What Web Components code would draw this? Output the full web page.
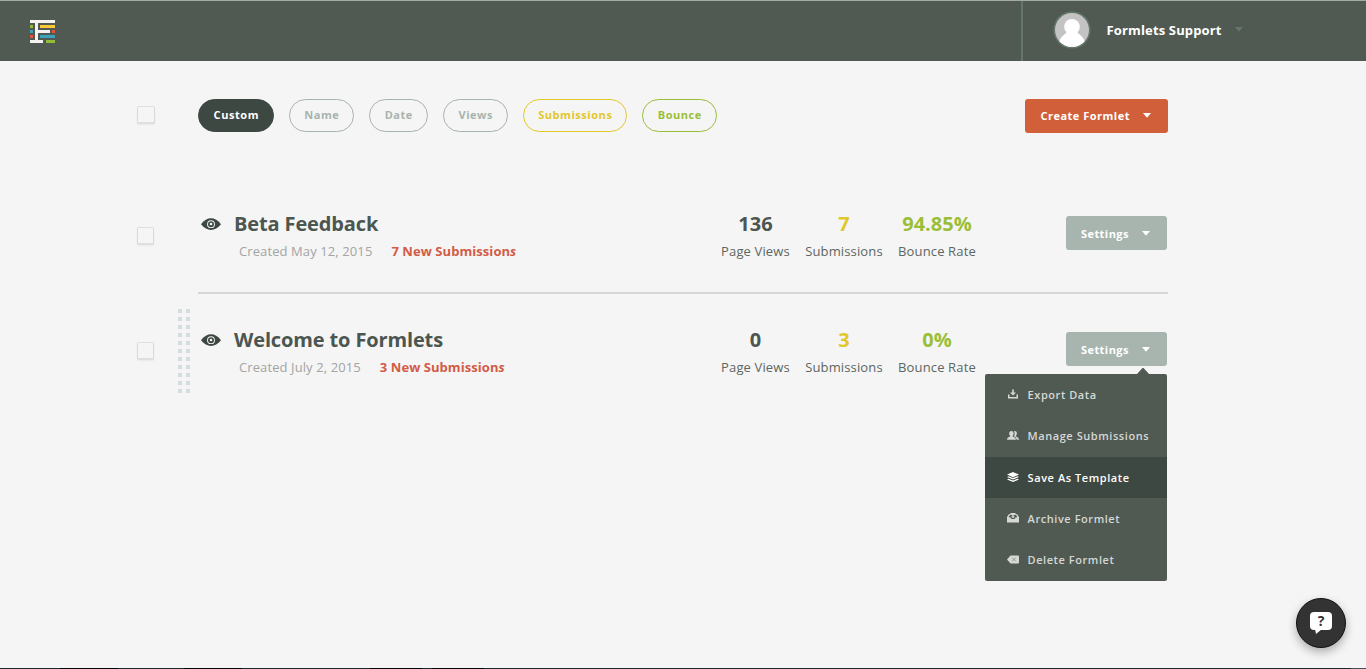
<!DOCTYPE html>
<html lang="en">
<head>
<meta charset="utf-8">
<title>Formlets</title>
<style>
html,body{margin:0;padding:0}
body{width:1366px;height:669px;overflow:hidden;background:#f5f5f5;font-family:"Open Sans","Noto Sans",sans-serif;color:#4c5651}
</style>
</head>
<body>
<formlets-app></formlets-app>
<script>
const define=(name,html)=>customElements.define(name,class extends HTMLElement{
  connectedCallback(){
    if(this.shadowRoot)return;
    const t=document.createElement('template');
    t.innerHTML=typeof html==='function'?html(this):html;
    this.attachShadow({mode:'open'}).appendChild(t.content.cloneNode(true));
  }
});

define('app-logo',`<style>:host{display:block;width:25px;height:23px}svg{display:block}</style>
<svg width="25" height="23" shape-rendering="crispEdges">
<path fill="#f5f3f1" d="M0 0h25v3H8v7h12v3H8v7h5v3H0v-3h5V3H0z"/>
<path fill="#fdc735" d="M10 5h15v3H10z"/><path fill="#91bd3a" d="M0 5h3v3H0zM16 20h9v3h-9z"/>
<path fill="#3ea2b9" d="M0 10h3v3H0zM10 15h15v3H10z"/><path fill="#e9513f" d="M0 15h3v3H0zM22 10h3v3h-3z"/></svg>`);

define('caret-down',`<style>:host{display:block;width:8px;height:5px}svg{display:block}</style>
<svg width="8" height="5"><path fill="currentColor" d="M0 0h8L4 4.800z"/></svg>`);

define('user-avatar',`<style>:host{display:block;width:38px;height:38px}svg{display:block}</style>
<svg width="38" height="38" viewBox="0 0 38 38"><defs><clipPath id="c"><circle cx="19" cy="19" r="17"/></clipPath></defs>
<circle cx="19" cy="19" r="18.6" fill="#64766b"/><circle cx="19" cy="19" r="17" fill="#c3c3c3"/>
<g clip-path="url(#c)" fill="#fff"><circle cx="19" cy="15.700" r="7.800"/><path d="M14 20h10c0 3 6 4 8 11v7H6v-7c2-7 8-8 8-11z"/></g></svg>`);

define('app-header',`<style>
:host{display:flex;box-sizing:border-box;height:61px;background:#505a53;border-top:1px solid #a3aaa5}
app-logo{margin:19px 0 0 30px}
.user{margin-left:auto;width:343px;border-left:2px solid #64766b;display:flex;align-items:flex-start;color:#fff}
user-avatar{margin:10px 0 0 30px}
.name{margin:20px 0 0 15.5px;font:700 13px/18px "Open Sans",sans-serif;letter-spacing:.15px;width:115px;white-space:nowrap}
caret-down{color:#64766b;margin:26px 0 0 13.5px}
</style><app-logo></app-logo><div class="user"><user-avatar></user-avatar><span class="name"><slot></slot></span><caret-down></caret-down></div>`);

define('check-box',`<style>:host{display:block;box-sizing:border-box;width:17px;height:18px;border:1px solid #dadada;border-bottom:2px solid #dfdfdf;border-top-color:#e0e0e0;border-radius:1.5px;background:#f5f5f5;box-shadow:0 1px 2px #0000000d}</style>`);

define('filter-pill',`<style>
:host{display:flex;box-sizing:border-box;height:33px;border:1px solid var(--c,#a7b4ad);border-radius:17px;color:var(--c,#a7b4ad);align-items:center;justify-content:center;font:700 11px/15px "Open Sans",sans-serif;letter-spacing:.55px;white-space:nowrap;width:var(--w);padding:0 0 2px .6px}
:host([active]){background:#3e4842;border-color:#3e4842;color:#fff}
</style><slot></slot>`);

define('drop-button',`<style>
:host{display:flex;box-sizing:border-box;height:34px;width:var(--w);border-radius:3px;background:var(--bg,#a7b5ae);color:#fff;font:700 11px/15px "Open Sans",sans-serif;letter-spacing:var(--ls,.44px);padding:var(--pt,10px) 17px 0 15.4px;justify-content:space-between;white-space:nowrap}
caret-down{margin-top:var(--ct,5px)}
</style><span><slot></slot></span><caret-down></caret-down>`);

define('stat-item',e=>`<style>
:host{display:block;width:var(--w);text-align:center;white-space:nowrap}
b{display:block;font:700 20px/27px "Open Sans",sans-serif;color:var(--c,#4c5651)}
span{display:flex;justify-content:center;margin-top:5px;font:400 13px/18px "Open Sans",sans-serif;letter-spacing:.14px;color:#5d6661}
</style><b>${e.getAttribute('value')}</b><span><slot></slot></span>`);

define('eye-icon',`<style>:host{display:block;width:20px;height:12px}svg{display:block}</style>
<svg width="20" height="12" viewBox="0 0 20 12"><path fill="#3e4842" d="M0 6.300C3 2 6.500.3 10 .3s7 1.700 10 6c-3 4-6.500 5.700-10 5.700S3 10.300 0 6.300z"/>
<circle cx="10" cy="6.200" r="3.900" fill="#f5f5f5"/><circle cx="10" cy="6.200" r="3" fill="#3e4842"/><circle cx="10" cy="6" r="1.300" fill="#f5f5f5"/></svg>`);

define('drag-grip',`<style>:host{display:grid;grid-template-columns:4px 4px;grid-auto-rows:4px;gap:4px}i{background:#d5dedf}</style>${'<i></i>'.repeat(22)}`);

define('formlet-row',e=>`<style>
:host{display:flex;position:relative;height:116px;width:1031px}
check-box{margin-top:var(--check,49px);flex:none}
.body{margin-left:44px;width:970px;box-sizing:border-box;height:116px;display:flex;align-items:flex-start;border-bottom:var(--line,2px) solid #d6d6d6}
eye-icon{margin:40px 0 0 3.4px;flex:none}
.info{width:486.6px;margin:32px 0 0 12.6px;white-space:nowrap}
h2{margin:0;font:700 20px/27px "Open Sans",sans-serif;color:#4c5651;letter-spacing:-.13px}
p{display:flex;gap:19px;margin:5px 0 0 5px;font:400 13px/18px "Open Sans",sans-serif;color:#a3a4a3}
p span{letter-spacing:.1px}
p b{color:#d25c47;letter-spacing:.06px}
.stats{display:flex;gap:15px;margin:32px 0 0 .4px;width:345px}
drag-grip{position:absolute;left:41px;top:15px}
.set{position:relative;margin-top:38px;margin-left:-.4px}
</style><check-box></check-box><div class="body"><eye-icon></eye-icon>
<div class="info"><h2>${e.getAttribute('name')}</h2><p><span>${e.getAttribute('created')}</span><b>${e.getAttribute('fresh')} New Submission<i>s</i></b></p></div>
<div class="stats"><stat-item value="${e.getAttribute('views')}" style="--w:69px">Page Views</stat-item>
<stat-item value="${e.getAttribute('subs')}" style="--w:78px;--c:#e2c729">Submissions</stat-item>
<stat-item value="${e.getAttribute('bounce')}" style="--w:78px;--c:#9abf37">Bounce Rate</stat-item></div>
<div class="set"><drop-button style="--w:101px">Settings</drop-button><slot></slot></div></div>
${e.hasAttribute('grip')?'<drag-grip></drag-grip>':''}`);

const icons={
export:'<path d="M5.200 .5h1.600v3H9L6 6.500l-3-3h2.200z"/><path d="M1 5.500h1.500V8h7V5.500H11v4H1z"/>',
users:'<path d="M4.300 0c1.700 0 2.300 1 2.300 2.400 0 1.100-.4 1.800-.9 2.400v.7C7.200 6.100 9 6.700 9 8.700H0c0-2 1.600-2.600 3.200-3.200v-.7c-.6-.6-1-1.300-1-2.400C2.200 1 2.900 0 4.300 0z"/><path d="M7.700 0c1.600 0 2.200 1 2.200 2.300 0 1.100-.5 1.900-.9 2.400v.7c1.500.6 3 1.300 3 3.300H9.600c0-1.800-1.300-2.900-2.600-3.400.4-.7.600-1.900.6-2.800C7.600 1.600 7.300.7 6.900.2z"/>',
layers:'<path d="M6 0l6 2.600-6 2.600L0 2.600z"/><path d="M1.500 4.200L0 5l6 2.500L12 5l-1.500-.8L6 6.100z"/><path d="M1.500 6.700L0 7.500 6 10l6-2.500-1.500-.8L6 8.500z"/>',
archive:'<path fill-rule="evenodd" d="M3.500 0h5v1.200h1.700L12 4v5.500H0V4l1.800-2.800h1.700zM3 2L1.500 4.300h1.800L4.500 6h3l1.200-1.700h1.800L9 2H6.700v1.500H8L6 5.300 4 3.500h1.300V2z"/>',
remove:'<path d="M3.500.5H11q1 0 1 1v6q0 1-1 1H3.500L0 4.500z"/><path stroke="#8b928e" stroke-width=".9" d="M5.300 2.800l3.400 3.400m0-3.400L5.300 6.200"/>'};
define('menu-item',e=>`<style>
:host{display:flex;box-sizing:border-box;height:41.4px;padding-bottom:.8px;align-items:center;color:#d5d8d5;font:600 11px/15px "Open Sans",sans-serif;letter-spacing:.56px;white-space:nowrap}
:host([active]){background:#3e4842;color:#fff}
svg{margin:0 9px 0 22px;flex:none}
</style><svg width="12" height="10" fill="currentColor">${icons[e.getAttribute('icon')]}</svg><span><slot></slot></span>`);

define('drop-menu',`<style>
:host{display:block;position:absolute;right:0;top:42px;width:182px;height:207px;background:#505a53;border-radius:2px}
.tip{position:absolute;right:18px;top:-6px;display:block}
</style><svg class="tip" width="12" height="6"><path fill="#505a53" d="M0 6L5.500 0h1L12 6z"/></svg><slot></slot>`);

define('help-bubble',`<style>
:host{position:absolute;left:1296px;top:598px;box-sizing:border-box;width:50px;height:50px;border-radius:50%;background:#333;border:1px solid #111;box-shadow:0 4px 10px #0000004d;display:flex;justify-content:center;padding-top:13px}
.b{position:relative;width:22px;height:18px;border-radius:4px;background:#fff;color:#333;font:700 14px/18px "Open Sans",sans-serif;text-align:center}
svg{position:absolute;left:5px;top:17px}
</style><div class="b">?<svg width="7" height="5"><path fill="#fff" d="M0 0h7L1 5z"/></svg></div>`);

define('formlets-app',`<style>
:host{display:flex;flex-direction:column;position:relative;width:1366px;height:669px}
main{padding:38px 0 0 137px;flex:1}
.bar{display:flex;height:79px;align-items:flex-start;width:1031px}
.bar check-box{margin:7px 43px 0 0;width:18px}
.pills{display:flex;gap:15px}
.bar drop-button{margin-left:auto}
.edge{height:1px;background:linear-gradient(90deg,#1e282e 60px,#050505 60px 118px,#1e282e 118px 184px,#050505 184px 242px,#1e282e 242px 370px,#050505 370px 422px,#1e282e 422px 432px,#050505 432px 484px,#1e282e 484px 1351px,#46505a 1351px)}
</style>
<app-header>Formlets Support</app-header>
<main><div class="bar"><check-box></check-box><div class="pills">
<filter-pill active style="--w:76px">Custom</filter-pill><filter-pill style="--w:65px">Name</filter-pill><filter-pill style="--w:59px">Date</filter-pill><filter-pill style="--w:65px">Views</filter-pill><filter-pill style="--w:104px;--c:#e2c729">Submissions</filter-pill><filter-pill style="--w:75px;--c:#9abf37">Bounce</filter-pill></div>
<drop-button style="--w:143px;--bg:#d1603a;--pt:9px;--ls:.5px">Create Formlet</drop-button></div>
<formlet-row name="Beta Feedback" created="Created May 12, 2015" fresh="7" views="136" subs="7" bounce="94.85%"></formlet-row>
<formlet-row grip style="--check:48px;--line:0px" name="Welcome to Formlets" created="Created July 2, 2015" fresh="3" views="0" subs="3" bounce="0%">
<drop-menu><menu-item icon="export">Export Data</menu-item><menu-item icon="users">Manage Submissions</menu-item><menu-item icon="layers" active>Save As Template</menu-item><menu-item icon="archive">Archive Formlet</menu-item><menu-item icon="remove">Delete Formlet</menu-item></drop-menu></formlet-row></main>
<div class="edge"></div><help-bubble></help-bubble>`);
</script>
</body>
</html>
